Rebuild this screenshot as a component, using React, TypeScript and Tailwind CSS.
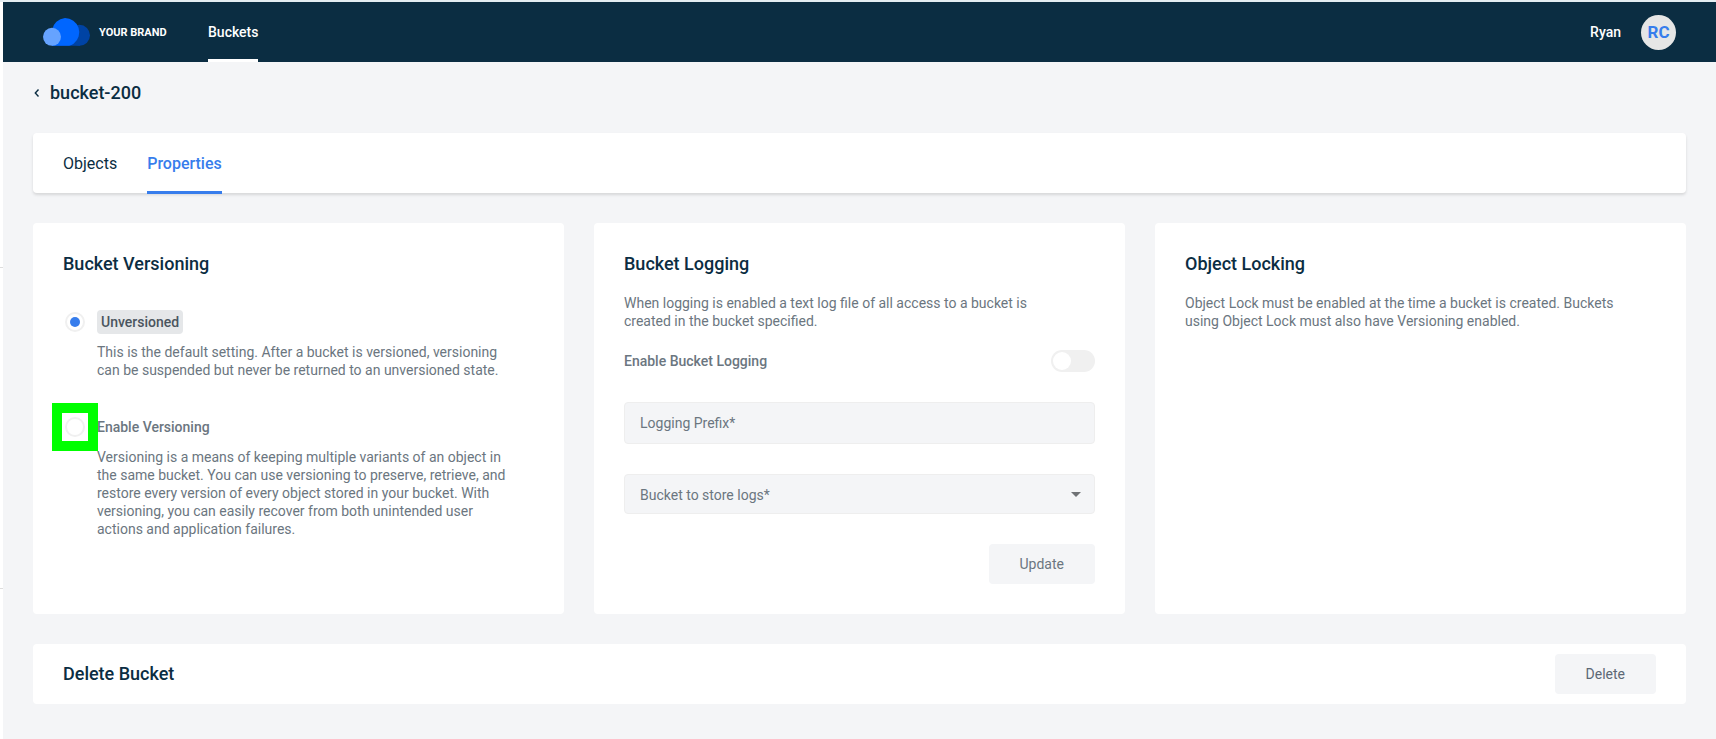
import { useState } from 'react';
import type { ReactNode } from 'react';

type Versioning = 'unversioned' | 'enabled';

// Brand logo
const CloudLogo = () => (
    <svg width="47" height="28" viewBox="0 0 47 28" aria-hidden="true">
        <circle cx="36.5" cy="17.3" r="10.5" fill="#0043a4" />
        <rect x="9" y="18" width="28" height="9.8" fill="#0043a4" />
        <path d="M22 0a14.3 14.3 0 0 1 8.6 25.7c-1.4 1.1-2.8 1.7-4.4 2.1H9V12A14.3 14.3 0 0 1 22 0z" fill="#0066ff" />
        <circle cx="9" cy="18.8" r="9" fill="#66a3ff" />
    </svg>
);

const Card = ({ title, children }: { title: string; children: ReactNode }) => (
    <section className="rounded bg-white p-[30px]">
        <h2 className="text-lg leading-[22px] font-medium">{title}</h2>
        {children}
    </section>
);

const radioClass =
    'grid size-5 shrink-0 appearance-none place-items-center rounded-full border-2 border-[#f0f0f0] bg-white before:size-[10px] before:rounded-full checked:before:bg-[#377dec]';

// Top navigation bar
const Header = () => (
    <header className="flex h-[60px] items-center bg-[#0b2d42] pr-10 pl-10 text-sm font-medium text-white">
        <a href="#home" className="flex w-[125px] items-center gap-[9px]">
            <CloudLogo />
            <span className="pt-[2px] text-[11px] leading-4 font-bold whitespace-nowrap">YOUR BRAND</span>
        </a>
        <nav className="ml-10 h-full">
            <a href="#buckets" className="flex h-full items-center border-b-3 border-white pt-[2px]">
                Buckets
            </a>
        </nav>
        <div className="ml-auto flex items-center gap-5">
            <span>Ryan</span>
            <button
                type="button"
                aria-label="Account"
                className="size-[35px] rounded-full bg-[#e6e6e6] text-[17px] leading-5 font-bold text-[#377dec]"
            >
                RC
            </button>
        </div>
    </header>
);

const VersioningCard = () => {
    const [versioning, setVersioning] = useState<Versioning>('unversioned');

    return (
        <Card title="Bucket Versioning">
            <div className="mt-[35px] flex flex-col gap-9 pl-[2px] text-sm leading-[18px] text-[#6b7680]">
                <div className="grid grid-cols-[20px_1fr] items-center gap-x-3 gap-y-[9px]">
                    <input
                        type="radio"
                        id="unversioned"
                        name="versioning"
                        className={radioClass}
                        checked={versioning === 'unversioned'}
                        onChange={() => setVersioning('unversioned')}
                    />
                    <label
                        htmlFor="unversioned"
                        className="justify-self-start rounded bg-[#e5e7e9] px-1 py-[3px] font-medium text-[#4b555e]"
                    >
                        Unversioned
                    </label>
                    <p className="col-start-2 max-w-[410px]">
                        This is the default setting. After a bucket is versioned, versioning can be suspended but never
                        be returned to an unversioned state.
                    </p>
                </div>
                <div className="grid grid-cols-[20px_1fr] items-center gap-x-3 gap-y-[9px]">
                    <div className="relative grid place-items-center">
                        <input
                            type="radio"
                            id="enable-versioning"
                            name="versioning"
                            className={radioClass}
                            checked={versioning === 'enabled'}
                            onChange={() => setVersioning('enabled')}
                        />
                        {/* highlight around the option */}
                        <span className="pointer-events-none absolute -inset-x-[13px] -inset-y-[14px] border-10 border-[#00ff00]" />
                    </div>
                    <label htmlFor="enable-versioning" className="justify-self-start py-[3px] font-medium">
                        Enable Versioning
                    </label>
                    <p className="col-start-2 max-w-[410px]">
                        Versioning is a means of keeping multiple variants of an object in the same bucket. You can use
                        versioning to preserve, retrieve, and restore every version of every object stored in your
                        bucket. With versioning, you can easily recover from both unintended user actions and
                        application failures.
                    </p>
                </div>
            </div>
        </Card>
    );
};

const LoggingCard = () => {
    const [logging, setLogging] = useState(false);

    return (
        <Card title="Bucket Logging">
            <form className="text-sm leading-[18px] text-[#6b7680]" onSubmit={(e) => e.preventDefault()}>
                <p className="mt-[19px] max-w-[430px]">
                    When logging is enabled a text log file of all access to a bucket is created in the bucket
                    specified.
                </p>
                <div className="mt-5 flex items-center justify-between">
                    <label htmlFor="logging" className="font-medium">
                        Enable Bucket Logging
                    </label>
                    <input
                        type="checkbox"
                        role="switch"
                        id="logging"
                        className="flex h-[22px] w-11 appearance-none items-center rounded-full bg-[#f0f0f0] px-[2px] before:size-[18px] before:rounded-full before:bg-white checked:justify-end checked:bg-[#377dec]"
                        checked={logging}
                        onChange={(e) => setLogging(e.target.checked)}
                    />
                </div>
                <input
                    type="text"
                    aria-label="Logging Prefix"
                    placeholder="Logging Prefix*"
                    className="mt-[30px] block h-[42px] w-full rounded border border-[#eeeeee] bg-[#f4f5f7] px-[15px] placeholder:text-[#6b7680]"
                />
                <div className="relative mt-[30px]">
                    <select
                        aria-label="Bucket to store logs"
                        className="block h-10 w-full appearance-none rounded border border-[#eeeeee] bg-[#f4f5f7] px-[15px] pt-[2px]"
                    >
                        <option>Bucket to store logs*</option>
                    </select>
                    <svg
                        className="pointer-events-none absolute top-[18px] right-[14px]"
                        width="10"
                        height="5"
                        viewBox="0 0 10 5"
                        aria-hidden="true"
                    >
                        <path d="M0 0h10L5 5z" fill="#6f7275" />
                    </svg>
                </div>
                <button type="submit" className="mt-[30px] ml-auto block h-10 rounded bg-[#f4f5f7] px-[31px]">
                    Update
                </button>
            </form>
        </Card>
    );
};

export default function App() {
    return (
        <div className="flex min-h-screen border-t-2 border-[#e4edf2] bg-white font-[Roboto,sans-serif] text-[#0b2d42]">
            <div className="flex w-[3px] shrink-0 flex-col gap-80 pt-[265px]">
                <hr className="border-[#dddddd]" />
                <hr className="border-[#dddddd]" />
            </div>
            <div className="min-w-0 flex-1 bg-[#f4f5f7]">
                <Header />
                <main className="px-[30px] pb-[30px]">
                    <div className="flex h-[61px] items-center">
                        <a href="#back" aria-label="Back to buckets">
                            <svg width="7" height="10" viewBox="0 0 7 10" fill="none" aria-hidden="true">
                                <path d="M5.5 1.5 2.3 5l3.2 3.5" stroke="#0b2d42" strokeWidth="1.4" />
                            </svg>
                        </a>
                        <h1 className="ml-[10px] text-lg leading-5 font-medium">bucket-200</h1>
                    </div>
                    <div className="mt-[10px] flex h-[60px] gap-[30px] rounded bg-white px-[30px] shadow-[0_2px_3px_rgba(0,0,0,0.12)]">
                        <a href="#objects" className="flex items-center pt-[2px]">
                            Objects
                        </a>
                        <a
                            href="#properties"
                            className="-mb-px flex items-center border-b-3 border-[#377dec] pt-1 font-medium text-[#377dec]"
                        >
                            Properties
                        </a>
                    </div>
                    <div className="mt-[30px] grid min-h-[391px] grid-cols-3 gap-[30px]">
                        <VersioningCard />
                        <LoggingCard />
                        <Card title="Object Locking">
                            <p className="mt-[19px] max-w-[430px] text-sm leading-[18px] text-[#6b7680]">
                                Object Lock must be enabled at the time a bucket is created. Buckets using Object Lock
                                must also have Versioning enabled.
                            </p>
                        </Card>
                    </div>
                    <section className="mt-[30px] flex h-[60px] items-center justify-between rounded bg-white px-[30px]">
                        <h2 className="text-lg leading-5 font-medium">Delete Bucket</h2>
                        <button type="button" className="h-10 rounded bg-[#f4f5f7] px-[31px] text-sm text-[#5c6875]">
                            Delete
                        </button>
                    </section>
                </main>
            </div>
        </div>
    );
}
